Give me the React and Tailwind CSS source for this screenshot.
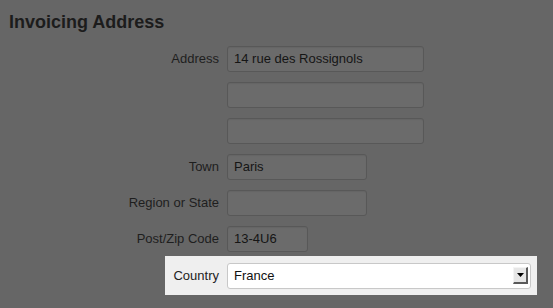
import React from 'react';

function Field({ label, value, width }) {
  return (
    <div className="flex h-[36px] items-center">
      <label className="w-[227px] pr-[8px] text-right text-[13px] text-[#1e1e1e]">{label}</label>
      <div
        className="flex h-[26px] items-center rounded-[3px] border border-[#585858] bg-[#6b6b6b] px-[6px] text-[13px] text-[#151515] shadow-[inset_0_1px_1px_rgba(0,0,0,0.06)]"
        style={{ width }}
      >
        {value}
      </div>
    </div>
  );
}

export default function App() {
  return (
    <div className="h-[308px] w-[553px] overflow-hidden bg-[#666666] font-['Liberation_Sans',Arial,sans-serif]">
      <h2 className="pl-[9px] pt-[11px] text-[18px] font-bold leading-[22px] text-[#1c1c1c]">Invoicing Address</h2>
      <div className="mt-[8px] flex flex-col">
        <Field label="Address" value="14 rue des Rossignols" width={197} />
        <Field label="" value="" width={197} />
        <Field label="" value="" width={197} />
        <Field label="Town" value="Paris" width={140} />
        <Field label="Region or State" value="" width={140} />
        <Field label="Post/Zip Code" value="13-4U6" width={81} />
        <div className="ml-[165px] mt-[-1px] flex h-[39px] w-[372px] items-center bg-[#efefef]">
          <label className="w-[62px] pr-[8px] text-right text-[13px] text-[#222]">Country</label>
          <div className="flex h-[26px] w-[304px] items-center justify-between rounded-[3px] border border-[#c8c8c8] bg-white pl-[6px] pr-[2px] text-[13px] text-[#111]">
            <span>France</span>
            <div className="flex h-[17px] w-[15px] items-center justify-center border-b-[2px] border-r-[2px] border-b-[#5a5a5a] border-r-[#5a5a5a] border-l border-t border-l-[#f4f4f4] border-t-[#f4f4f4] bg-[#e6e6e6]">
              <svg width="7" height="4" viewBox="0 0 7 4"><path d="M0 0h7L3.5 4z" fill="#000" /></svg>
            </div>
          </div>
        </div>
      </div>
    </div>
  );
}
